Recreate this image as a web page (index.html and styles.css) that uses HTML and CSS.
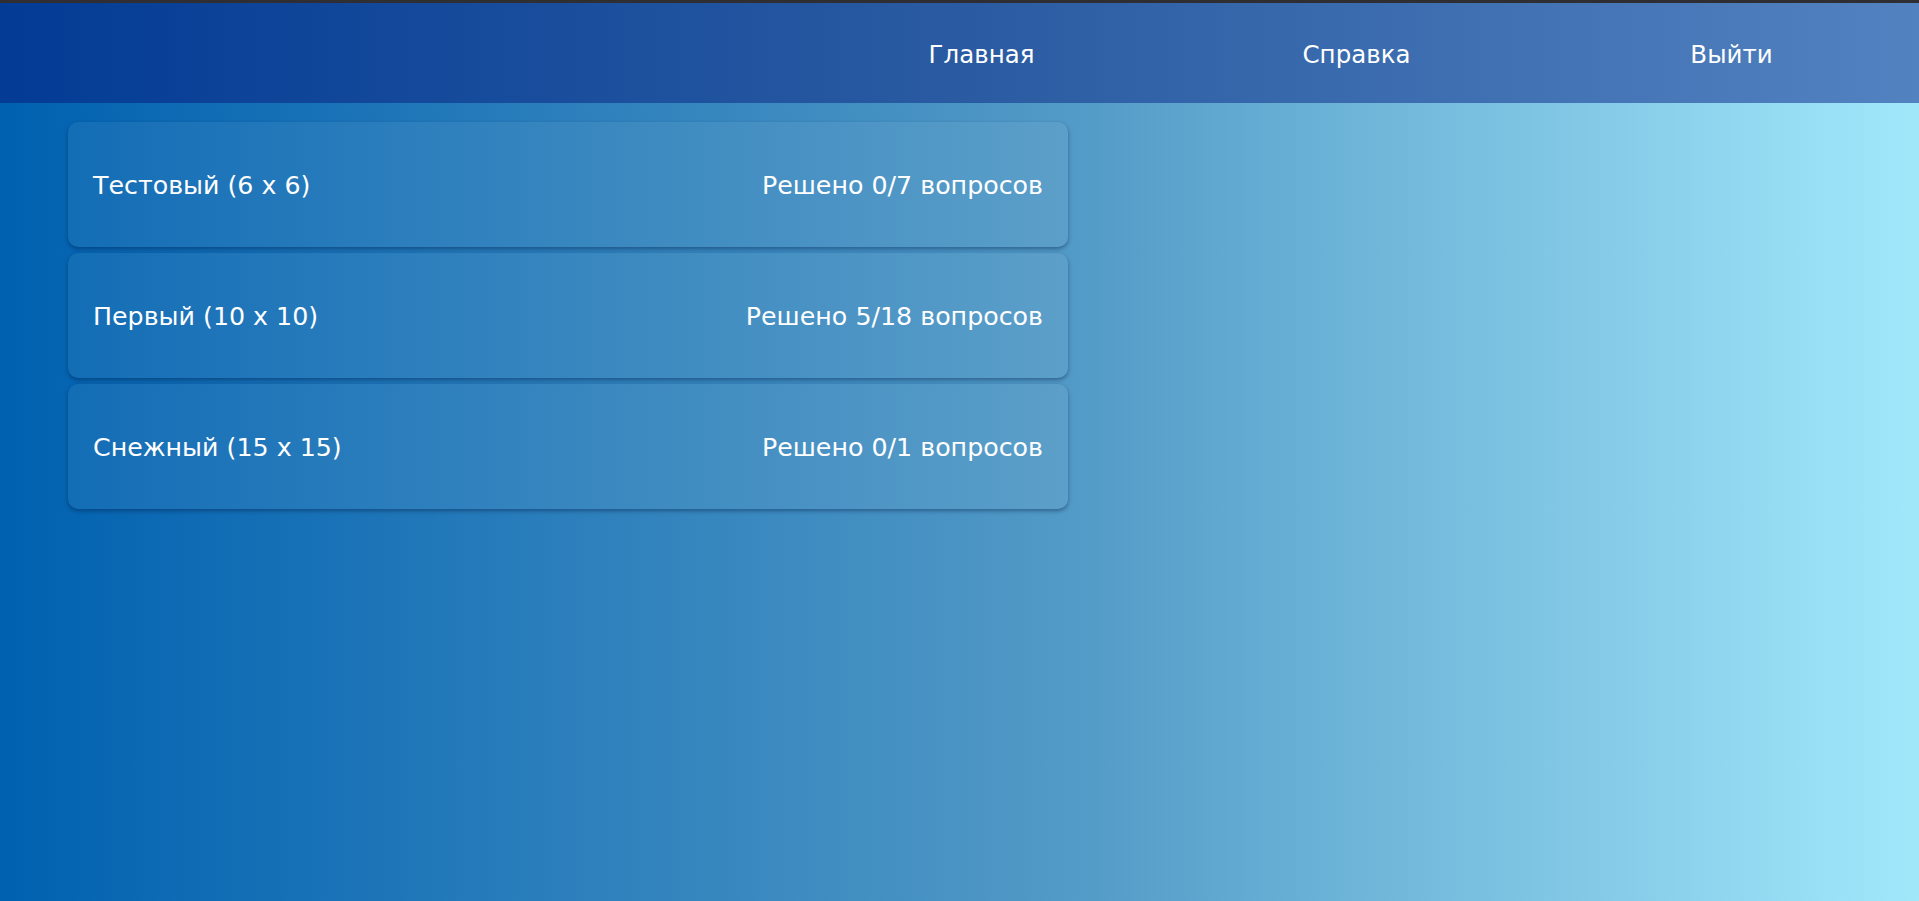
FILE: index.html
```html
<!DOCTYPE html>
<html lang="ru">
<head>
<meta charset="utf-8">
<title>Кроссворды</title>
<link rel="stylesheet" href="styles.css">
</head>
<body>
<div class="topline"></div>
<header class="header">
  <div class="spacer"></div>
  <nav class="nav">
    <a class="nav-item" href="#">Главная</a>
    <a class="nav-item" href="#">Справка</a>
    <a class="nav-item" href="#">Выйти</a>
  </nav>
</header>
<main class="content">
  <div class="list">
    <div class="card"><span class="title">Тестовый (6 x 6)</span><span class="status">Решено 0/7 вопросов</span></div>
    <div class="card"><span class="title">Первый (10 x 10)</span><span class="status">Решено 5/18 вопросов</span></div>
    <div class="card"><span class="title">Снежный (15 x 15)</span><span class="status">Решено 0/1 вопросов</span></div>
  </div>
</main>
</body>
</html>
```
FILE: styles.css
```css
html, body {
  margin: 0;
  padding: 0;
  height: 100%;
}
body {
  font-family: "DejaVu Sans", Verdana, sans-serif;
  color: #fff;
  background: linear-gradient(to right, #0061b0 0%, #5199c6 55%, #a2e8fb 100%);
  overflow: hidden;
}
.topline {
  height: 3px;
  background: #2f2f33;
}
.header {
  height: 100px;
  box-sizing: border-box;
  padding-top: 2px;
  display: flex;
  align-items: center;
  background: linear-gradient(to right, #033b95 0%, #2a5ba2 50%, #5282c0 100%);
}
.spacer {
  flex: 1;
}
.nav {
  display: flex;
}
.nav-item {
  width: 375px;
  text-align: center;
  color: #fff;
  text-decoration: none;
  font-size: 24.5px;
}
.content {
  padding: 19px 0 0 68px;
}
.list {
  width: 1000px;
  display: flex;
  flex-direction: column;
  gap: 6px;
}
.card {
  height: 125px;
  box-sizing: border-box;
  padding: 2px 25px 0 25px;
  display: flex;
  align-items: center;
  justify-content: space-between;
  border-radius: 10px;
  background: rgba(255, 255, 255, 0.06);
  box-shadow: 0 2px 4px rgba(0, 20, 60, 0.4);
  font-size: 25.3px;
}
```
